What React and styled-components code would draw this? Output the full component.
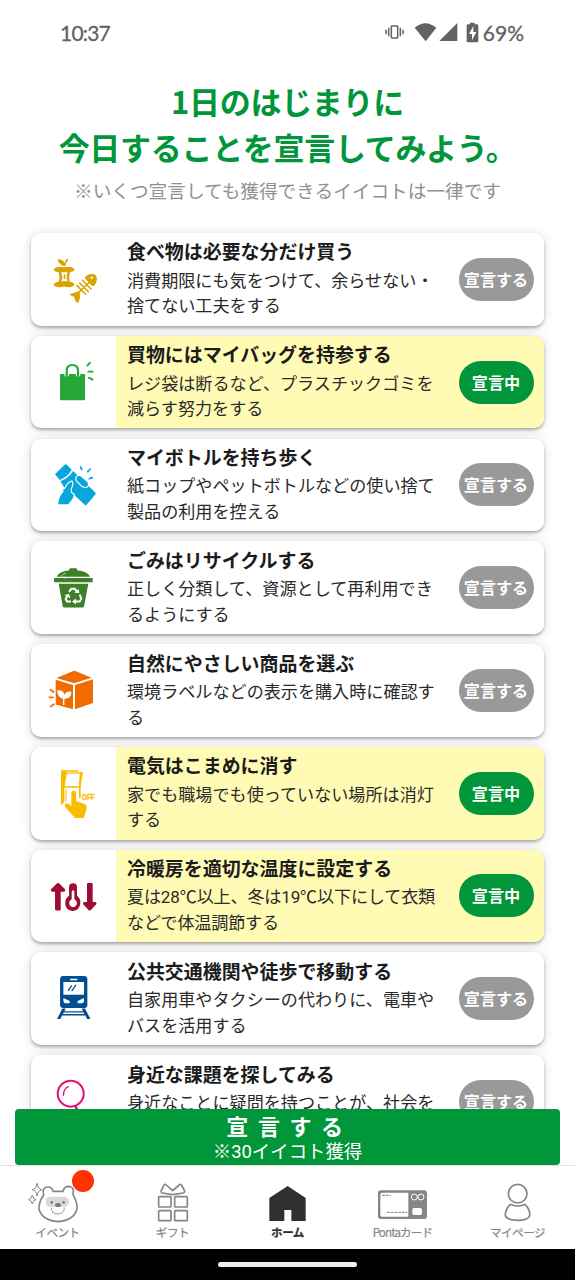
import React from 'react';
import styled, { createGlobalStyle } from 'styled-components';

const GlobalStyle = createGlobalStyle`
  * {
    box-sizing: border-box;
  }

  body {
    margin: 0;
    background: #fff;
    font-family: Roboto, "Noto Sans CJK JP", sans-serif;
    color: #1c1c1c;
  }
`;

// Styled Components
const Screen = styled.div`
  display: flex;
  flex-direction: column;
  width: 575px;
  height: 1280px;
  background: #fff;
  overflow: hidden;
`;

const StatusBar = styled.div`
  display: flex;
  justify-content: space-between;
  align-items: center;
  flex-shrink: 0;
  height: 66px;
  padding: 0 51px 2px 60px;
  font-family: Lato, sans-serif;
  font-size: 21px;
  color: #626262;
`;

const Clock = styled.span`
  letter-spacing: -0.8px;
  -webkit-text-stroke: 0.3px #626262;
`;

const StatusIcons = styled.div`
  display: flex;
  align-items: center;
  -webkit-text-stroke: 0.3px #626262;

  svg {
    display: block;
  }
`;

const Percent = styled.span`
  margin-left: 4px;
`;

const Header = styled.header`
  flex-shrink: 0;
  height: 167px;
  padding-top: 12px;
  text-align: center;
  font-family: "Noto Sans CJK JP", sans-serif;
`;

const Heading = styled.h1`
  margin: 0;
  font-size: 31px;
  font-weight: 700;
  line-height: 46px;
  letter-spacing: -0.3px;
  color: #009639;
`;

const HeadingLine = styled.span`
  display: block;
`;

const Note = styled.p`
  margin: 6px 0 0;
  font-size: 18.65px;
  line-height: 28px;
  color: #919191;
`;

const ListArea = styled.main`
  position: relative;
  flex: 1;
  min-height: 0;
`;

const List = styled.div`
  display: flex;
  flex-direction: column;
  gap: 10.2px;
  height: 100%;
  padding: 0 31px;
`;

const Card = styled.section`
  display: flex;
  flex-shrink: 0;
  height: 92.6px;
  border-radius: 10px;
  background: #fff;
  box-shadow: 0 2px 3px rgba(0, 0, 0, 0.28), 0 1px 12px rgba(0, 0, 0, 0.14);
  overflow: hidden;
`;

const CardIcon = styled.svg`
  flex-shrink: 0;
  width: 85.4px;
  height: 92.6px;
`;

const CardBody = styled.div`
  display: flex;
  flex: 1;
  align-items: center;
  justify-content: space-between;
  padding: 0 10px 0 10.6px;
  background: ${(props) => (props.$active ? '#fffbb5' : '#fff')};
`;

const CardText = styled.div`
  align-self: flex-start;
  width: 312px;
  padding-top: 6.4px;
`;

const CardTitle = styled.h2`
  margin: 0 0 1.4px;
  font-size: 18.95px;
  font-weight: 700;
  line-height: 28px;
  white-space: nowrap;
`;

const CardDescription = styled.p`
  margin: 0;
  font-size: 17.1px;
  line-height: 25.7px;
  letter-spacing: ${(props) => (props.$tight ? '-0.17px' : 'normal')};
  color: #2a2a2a;
`;

const DeclareButton = styled.button`
  flex-shrink: 0;
  width: 75px;
  height: 43px;
  padding: 0 1px 1px 0;
  border: none;
  border-radius: 22px;
  background: ${(props) => (props.$active ? '#009639' : '#999')};
  color: #fff;
  font-family: "Noto Sans CJK JP", sans-serif;
  font-size: 16.1px;
  font-weight: 700;
  line-height: 24px;
`;

// Floats over the end of the scrolled list
const SubmitBar = styled.button`
  position: absolute;
  left: 15px;
  right: 15px;
  bottom: 0;
  display: flex;
  flex-direction: column;
  align-items: center;
  height: 56px;
  padding: 6px 0 0;
  border: none;
  border-radius: 4px;
  background: #009639;
  color: #fff;
  font-family: Roboto, "Noto Sans CJK JP", sans-serif;
`;

const SubmitLabel = styled.span`
  padding-left: 4px;
  font-size: 22px;
  font-weight: 700;
  line-height: 26px;
  letter-spacing: 9.6px;
`;

const SubmitNote = styled.span`
  font-size: 18.4px;
  line-height: 22px;
`;

const TabBar = styled.nav`
  display: grid;
  grid-template-columns: repeat(5, 115px);
  flex-shrink: 0;
  height: 84px;
  border-top: 1px solid #e4e4e4;
  background: #fff;
`;

const Tab = styled.div`
  display: flex;
  flex-direction: column;
  align-items: center;
  color: ${(props) => (props.$active ? '#2e2e2e' : '#858585')};
  font-family: "Noto Sans CJK JP", sans-serif;
  font-size: 11.6px;
  font-weight: ${(props) => (props.$active ? 700 : 400)};
  line-height: 17px;
  letter-spacing: ${(props) => props.$spacing || '-0.5px'};
  -webkit-text-stroke: 0.2px currentColor;

  svg {
    display: block;
    width: 115px;
    height: 58px;
  }
`;

const SystemBar = styled.div`
  display: flex;
  justify-content: center;
  flex-shrink: 0;
  height: 31px;
  padding-top: 13px;
  background: #000;
`;

const Handle = styled.div`
  width: 139px;
  height: 5px;
  border-radius: 3px;
  background: #eee;
`;

const StatusGlyph = styled.svg`
  margin-left: ${(props) => props.$gap || '0'};
`;

// Status icons
const VibrateIcon = () => (
  <StatusGlyph width="19" height="16" viewBox="0 0 57 48" fill="none" stroke="#626262" strokeWidth="4.5">
    <rect x="19" y="6" width="19" height="36" rx="2" />
    <path d="M11 11v26M3 17v14M46 11v26M54 17v14" />
  </StatusGlyph>
);

const WifiIcon = () => (
  <StatusGlyph $gap="10px" width="23" height="20" viewBox="0 0 69 60" fill="#626262">
    <path d="M2 17Q34-10 67 17L35 58Z" />
  </StatusGlyph>
);

const SignalIcon = () => (
  <StatusGlyph $gap="2px" width="19" height="20" viewBox="0 0 57 60" fill="#626262">
    <path d="M55 3v54H1Z" />
  </StatusGlyph>
);

const BatteryIcon = () => (
  <StatusGlyph $gap="8px" width="13" height="21" viewBox="0 0 39 63">
    <path d="M12 2h14v5h7q4 0 4 4v46q0 4-4 4H6q-4 0-4-4V11q0-4 4-4h6z" fill="#626262" />
    <path d="M22 12 9 36h9v19l13-25h-9z" fill="#fff" />
  </StatusGlyph>
);

// Card icons
const FoodIcon = () => (
  <CardIcon viewBox="-42 -51 256 278">
    <g fill="#d9a300">
      <path d="M38 28Q56 28 58 40Q60 32 66 26L70 29Q62 37 61 48H56Q40 44 38 28Z" />
      <path d="M26 60Q32 46 57 52Q82 46 89 60Q83 67 75 66Q70 80 74 95Q84 95 89 105Q80 115 57 110Q34 115 25 105Q31 95 41 95Q46 80 40 66Q31 67 26 60Z" />
      <path d="M119 84Q128 69 148 73Q158 80 155 92Q152 106 142 109Z" />
      <path d="M102 124 75 132Q76 139 87 140Q90 156 98 160Q107 149 104 126Z" />
    </g>
    <path d="M48 67Q55 81 49 94H68Q62 81 68 67Z" fill="#fff" />
    <path d="M58.500 75v10" stroke="#d9a300" strokeWidth="5" strokeLinecap="round" />
    <circle cx="140" cy="83" r="3.500" fill="#fff" />
    <path d="M100 128 134 96M112 91l26 26M104 99l26 26M96 107l26 26" stroke="#d9a300" strokeWidth="4.500" strokeLinecap="round" />
  </CardIcon>
);

const BagIcon = () => (
  <CardIcon viewBox="33 333 256 278">
    <path d="M120 447h75v76q0 3-3 3h-69q-3 0-3-3z" fill="#25a838" />
    <path d="M140 454v-17q0-17 17-17t17 17v17" fill="none" stroke="#fff" strokeWidth="13" />
    <path d="M140 452v-15q0-17 17-17t17 17v15" fill="none" stroke="#25a838" strokeWidth="6.5" strokeLinecap="round" />
    <path d="M202 422 210 413M205 440h13M206 458l12 6" fill="none" stroke="#25a838" strokeWidth="5.5" strokeLinecap="round" />
  </CardIcon>
);

const BottleIcon = () => (
  <CardIcon viewBox="-42 -49 256 278" fill="#07a6dc">
    <path d="M30 57 59 28Q62 25 66 29L80 43Q70 63 44 74Z" />
    <path d="M46 78Q72 68 84 47L151 112Q153 115 151 118L124 149Q121 151 118 148L80 112 60 100Z" />
    <g stroke="#fff" strokeWidth="3.500">
      <path d="M94 76Q89 67 97 61Q104 58 109 63L128 79Q134 88 127 95Q119 99 110 93Z" />
      <path d="M46 82 55 101Q59 101 61 95Q69 80 80 77Q86 81 82 92Q77 101 79 111L88 118Q87 130 80 137L70 149H37L40 133Q44 119 54 108Z" />
    </g>
    <path d="M107 35l3 8M136 41l-8 8M133 70l9-3" fill="none" stroke="#07a6dc" strokeWidth="5" strokeLinecap="round" />
  </CardIcon>
);

const RecycleIcon = () => (
  <CardIcon viewBox="33 319 256 278">
    <g fill="#3f7f27">
      <path d="M110 426Q119 409 148 407V403Q149 401 151 401H169Q171 401 171 403V407Q201 409 210 426Z" />
      <path d="M104 430h112q2 0 2 2v9q0 2-2 2H104q-2 0-2-2v-9q0-2 2-2z" />
      <path d="M116 447H205L192 515Q191 519 187 519H133Q129 519 128 515Z" />
    </g>
    <path d="M124 424q5-6 13-8" fill="none" stroke="#fff" strokeWidth="2" />
    <path d="M120 428h15v4" fill="none" stroke="#fff" strokeWidth="2" />
    <path d="M147 472 154 462H164L171 472M179 480 184 492 179 501H165M153 501H141L137 493 143 481" fill="none" stroke="#fff" strokeWidth="6" strokeLinejoin="round" />
    <path d="M163 474 178 476 176 463ZM168 492v18l-12-9zM133 482l14-5 4 14z" fill="#fff" />
  </CardIcon>
);

const EcoBoxIcon = () => (
  <CardIcon viewBox="33 12 256 278">
    <g fill="#f06c00">
      <path d="M109 114 160 93Q163 92 166 93L215 113 162 130Z" />
      <path d="M107 119 159 135V208L107 194Z" />
      <path d="M165 135 219 118V189L165 208Z" />
    </g>
    <path d="M111 151Q130 149 133 164Q139 153 154 155Q154 175 136 176L133 179V195H129V177Q112 172 111 151Z" fill="#fff" />
    <path d="M91 149 101 156M88 172h11M92 200l9-7" fill="none" stroke="#f06c00" strokeWidth="5.5" strokeLinecap="round" />
  </CardIcon>
);

const OffLabel = styled.text`
  font-family: "Liberation Sans", sans-serif;
  font-size: 25px;
  font-weight: 700;
  fill: #fbbc00;
  stroke: #fbbc00;
  stroke-width: 1px;
`;

const SwitchIcon = () => (
  <CardIcon viewBox="-42 -40 256 278" fill="#fbbc00">
    <path d="M48 30H100V34H65L58 83V126L48 134Z" />
    <path d="M63 39 111 37 103 80H57Z" fill="#fff" stroke="#fbbc00" strokeWidth="4" />
    <path d="M104 37h9l-6 44v32h-5V80z" />
    <path d="M63 86v38" stroke="#fbbc00" strokeWidth="3" />
    <g stroke="#fff" strokeWidth="7">
      <path d="M79 138V98Q79 91 86 91T93 98V122L121 132Q127 136 125 145L117 170Q116 173 113 173H90L60 140Q57 133 63 129Q71 127 79 138Z" />
    </g>
    <path d="M79 138V98Q79 91 86 91T93 98V122L121 132Q127 136 125 145L117 170Q116 173 113 173H90L60 140Q57 133 63 129Q71 127 79 138Z" />
    <OffLabel x="111" y="119" textLength="38" lengthAdjust="spacingAndGlyphs">OFF</OffLabel>
  </CardIcon>
);

const TemperatureIcon = () => (
  <CardIcon viewBox="33 12 256 278">
    <g fill="#9d0d35">
      <path d="M111 112Q114 110 117 112L135 130Q137 137 130 137H122V191Q122 194 119 194H108Q105 194 105 191V137H97Q90 136 93 130Z" />
      <path d="M204 111H215Q218 111 218 114V168H226Q232 170 228 176L212 193Q209 195 206 193L190 176Q187 170 192 168H201V114Q201 111 204 111Z" />
      <path d="M147 124Q147 112 159 112T171 124V149Q184 158 180 177Q175 195 158 195T136 177Q133 159 147 149Z" />
    </g>
    <path d="M155 138Q155 133 159 133T163 138V160Q173 165 170 176Q167 184 159 184T148 176Q145 166 155 160Z" fill="#fff" />
  </CardIcon>
);

const TrainIcon = () => (
  <CardIcon viewBox="33 630 256 278" fill="#004e93">
    <path d="M127 702H195Q202 703 202 711V791Q201 798 195 798H127Q120 797 120 791V711Q120 703 127 702Z" />
    <path d="M130 720h62v38h-62z" fill="#fff" />
    <rect x="150" y="710" width="22" height="5" rx="2" fill="#fff" />
    <path d="M130 768 149 777V784H136Q130 782 130 776ZM192 768 173 777V784H186Q192 782 192 776Z" fill="#fff" />
    <path d="M145 745 154 732M156 746 167 730" stroke="#004e93" strokeWidth="4" strokeLinecap="round" />
    <path d="M127 800H137L133 808H189L185 800H195L211 831H201L196 821H126L121 831H111ZM131 812 129 816H193L191 812Z" fillRule="evenodd" />
  </CardIcon>
);

const SearchIcon = () => (
  <CardIcon viewBox="93 30 256 278" fill="none" stroke="#ea0d72">
    <circle cx="212" cy="146" r="39" strokeWidth="6" />
    <path d="M190 151Q191 130 205 125" strokeWidth="4" strokeLinecap="round" />
    <path d="M225 183 246 218" strokeWidth="7" />
  </CardIcon>
);

// Tab icons
const BearIcon = () => (
  <svg viewBox="0 363 345 174" fill="none" stroke="#858585" strokeWidth="5" strokeLinejoin="round">
    <rect x="137" y="455" width="70" height="31" rx="15" fill="#d9d9d9" stroke="none" />
    <path d="M131 450Q125 427 143 426Q156 425 159 439H189Q192 424 207 424Q224 426 219 448Q233 474 231 492Q222 526 174 530Q126 526 117 492Q116 471 131 450Z" />
    <path d="M154 488Q154 506 173 507Q193 506 193 488" strokeWidth="2.5" />
    <g fill="#777" stroke="none">
      <ellipse cx="155" cy="472" rx="3.5" ry="5" />
      <ellipse cx="191" cy="472" rx="3.5" ry="5" />
      <ellipse cx="174" cy="480" rx="9" ry="6" />
    </g>
    <path d="M111 415Q113 432 126 434Q113 436 111 453Q109 436 97 434Q109 432 111 415ZM97 450Q99 463 108 464Q99 466 97 477Q95 466 86 464Q95 463 97 450Z" strokeWidth="3" />
    <circle cx="249" cy="408" r="33" fill="#ff3200" stroke="none" />
  </svg>
);

const GiftIcon = () => (
  <svg viewBox="345 363 345 174" fill="none" stroke="#858585" strokeWidth="5" strokeLinejoin="round">
    <rect x="476" y="455" width="37" height="31" rx="2" />
    <rect x="524" y="455" width="38" height="31" rx="2" />
    <rect x="476" y="497" width="37" height="30" rx="2" />
    <rect x="524" y="497" width="38" height="30" rx="2" />
    <path d="M518 437 499 420Q495 416 492 421L483 438Q482 442 487 444L518 449 550 444Q555 442 554 438L545 421Q542 416 538 420Z" />
  </svg>
);

const HomeIcon = () => (
  <svg viewBox="690 363 345 174">
    <path d="M808 459 863 423 917 459V528H874V495H853V528H808Z" fill="#303030" />
  </svg>
);

const PontaIcon = () => (
  <svg viewBox="165 363 345 174" fill="none">
    <rect x="264" y="436" width="147" height="86" rx="10" fill="#858585" />
    <path d="M276 443H355V515H276Q271 515 271 509V449Q271 443 276 443Z" fill="#fff" />
    <path d="M276 451h26M291 502h61" stroke="#858585" strokeWidth="3" strokeDasharray="9 2" />
    <circle cx="373" cy="456" r="9" stroke="#fff" strokeWidth="3" />
    <circle cx="393" cy="456" r="9" stroke="#fff" strokeWidth="3" />
    <rect x="367" y="489" width="29" height="21" rx="5" fill="#fff" />
  </svg>
);

const PersonIcon = () => (
  <svg viewBox="510 363 345 174" fill="none" stroke="#858585" strokeWidth="5" strokeLinejoin="round">
    <circle cx="683" cy="446" r="28" />
    <path d="M660 479H665Q683 487 701 479H706Q721 495 719 512Q714 526 683 526T646 512Q645 495 660 479Z" />
  </svg>
);

const items = [
  { title: '食べ物は必要な分だけ買う', text: '消費期限にも気をつけて、余らせない・捨てない工夫をする', icon: <FoodIcon /> },
  { title: '買物にはマイバッグを持参する', text: 'レジ袋は断るなど、プラスチックゴミを減らす努力をする', icon: <BagIcon />, declared: true },
  { title: 'マイボトルを持ち歩く', text: '紙コップやペットボトルなどの使い捨て製品の利用を控える', icon: <BottleIcon /> },
  { title: 'ごみはリサイクルする', text: '正しく分類して、資源として再利用できるようにする', icon: <RecycleIcon /> },
  { title: '自然にやさしい商品を選ぶ', text: '環境ラベルなどの表示を購入時に確認する', icon: <EcoBoxIcon /> },
  { title: '電気はこまめに消す', text: '家でも職場でも使っていない場所は消灯する', icon: <SwitchIcon />, declared: true },
  {
    title: '冷暖房を適切な温度に設定する',
    text: '夏は28℃以上、冬は19℃以下にして衣類などで体温調節する',
    icon: <TemperatureIcon />,
    declared: true,
    tight: true,
  },
  { title: '公共交通機関や徒歩で移動する', text: '自家用車やタクシーの代わりに、電車やバスを活用する', icon: <TrainIcon /> },
  { title: '身近な課題を探してみる', text: '身近なことに疑問を持つことが、社会を', icon: <SearchIcon /> },
];

const App = () => (
  <>
    <GlobalStyle />
    <Screen>
      <StatusBar>
        <Clock>10:37</Clock>
        <StatusIcons>
          <VibrateIcon />
          <WifiIcon />
          <SignalIcon />
          <BatteryIcon />
          <Percent>69%</Percent>
        </StatusIcons>
      </StatusBar>

      <Header>
        <Heading>
          <HeadingLine>1日のはじまりに</HeadingLine>
          <HeadingLine>今日することを宣言してみよう。</HeadingLine>
        </Heading>
        <Note>※いくつ宣言しても獲得できるイイコトは一律です</Note>
      </Header>

      <ListArea>
        <List>
          {items.map((item) => (
            <Card key={item.title}>
              {item.icon}
              <CardBody $active={item.declared}>
                <CardText>
                  <CardTitle>{item.title}</CardTitle>
                  <CardDescription $tight={item.tight}>{item.text}</CardDescription>
                </CardText>
                <DeclareButton $active={item.declared}>
                  {item.declared ? '宣言中' : '宣言する'}
                </DeclareButton>
              </CardBody>
            </Card>
          ))}
        </List>
        <SubmitBar>
          <SubmitLabel>宣言する</SubmitLabel>
          <SubmitNote>※30イイコト獲得</SubmitNote>
        </SubmitBar>
      </ListArea>

      <TabBar>
        <Tab>
          <BearIcon />
          イベント
        </Tab>
        <Tab>
          <GiftIcon />
          ギフト
        </Tab>
        <Tab $active>
          <HomeIcon />
          ホーム
        </Tab>
        <Tab $spacing="-0.85px">
          <PontaIcon />
          Pontaカード
        </Tab>
        <Tab>
          <PersonIcon />
          マイページ
        </Tab>
      </TabBar>
      <SystemBar>
        <Handle />
      </SystemBar>
    </Screen>
  </>
);

export default App;
